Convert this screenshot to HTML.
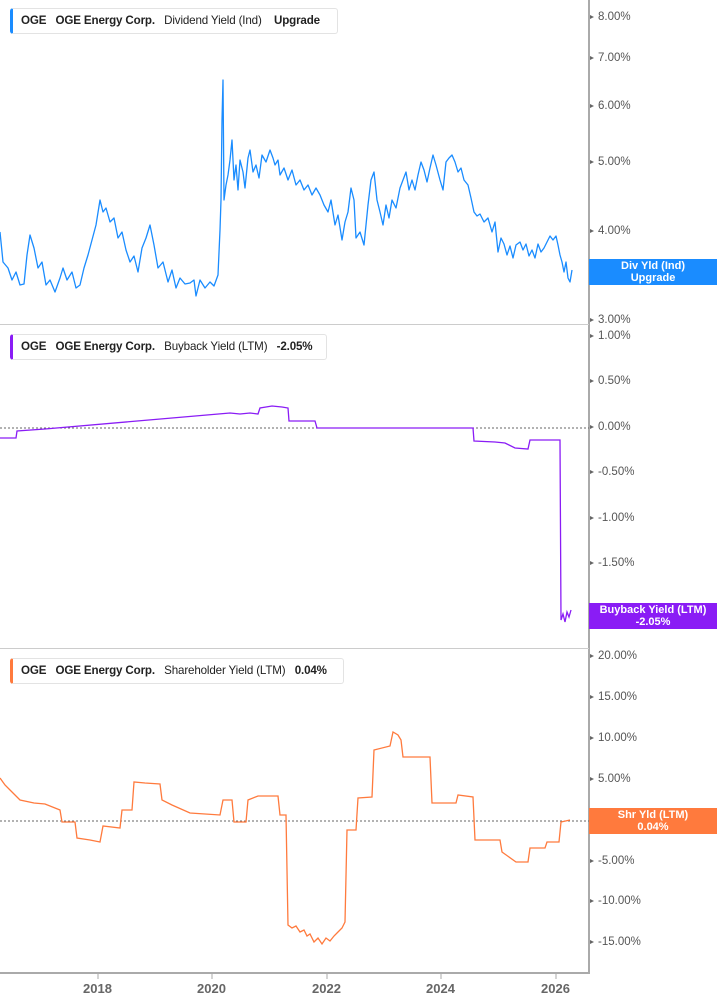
<!DOCTYPE html>
<html><head><meta charset="utf-8"><style>
body{margin:0;width:717px;height:1005px;background:#fff;overflow:hidden;font-family:"Liberation Sans",sans-serif;position:relative}
.hdr{position:absolute;left:10px;height:24px;border:1px solid #e3e3e3;border-left:3px solid;border-radius:3px;background:#fff;font-size:11.6px;letter-spacing:-0.15px;line-height:24px;color:#222;padding-left:8px;white-space:nowrap;box-sizing:content-box}
.b{font-weight:bold}
.lab{position:absolute;left:598px;font-size:11.5px;color:#555}
.tk{position:absolute;left:590px;width:0;height:0;border-left:4px solid #666;border-top:2.5px solid transparent;border-bottom:2.5px solid transparent}
.badge{position:absolute;left:589px;width:128px;height:26px;color:#fff;font-weight:bold;font-size:11px;line-height:12px;text-align:center;padding-top:1px;box-sizing:border-box}
.yr{position:absolute;top:981px;font-size:13px;font-weight:bold;color:#666}
</style></head><body>
<svg width="717" height="1005" style="position:absolute;left:0;top:0">
<line x1="589" y1="0" x2="589" y2="974" stroke="#aaa" stroke-width="2"/>
<line x1="0" y1="324.5" x2="589" y2="324.5" stroke="#ccc"/>
<line x1="0" y1="648.5" x2="589" y2="648.5" stroke="#ccc"/>
<line x1="0" y1="973" x2="590" y2="973" stroke="#aaa" stroke-width="2"/>
<g stroke="#aaa"><line x1="98" y1="973" x2="98" y2="979"/><line x1="212" y1="973" x2="212" y2="979"/><line x1="327" y1="973" x2="327" y2="979"/><line x1="441" y1="973" x2="441" y2="979"/><line x1="556" y1="973" x2="556" y2="979"/></g>
<line x1="0" y1="428" x2="589" y2="428" stroke="#666" stroke-dasharray="2,2"/>
<line x1="0" y1="821" x2="589" y2="821" stroke="#666" stroke-dasharray="2,2"/>
<polyline fill="none" stroke="#1a8cff" stroke-width="1.3" stroke-linejoin="round" points="0,232 3,262 8,268 12,280 16,272 20,285 24,284 27,255 30,235 34,248 38,268 42,262 46,285 50,280 55,292 60,278 63,268 67,280 72,272 76,288 80,285 84,268 88,255 92,240 96,225 100,200 103,212 106,208 110,222 114,218 118,238 122,232 126,250 130,262 134,256 138,272 142,248 146,238 150,225 154,245 158,268 163,262 168,282 172,270 176,288 180,278 185,284 190,283 194,280 196,296 200,280 205,288 210,282 214,286 218,275 220,230 221,200 222,120 223,80 224,200 226,185 228,175 230,160 232,140 234,180 236,165 238,190 240,160 243,172 245,188 248,158 250,150 253,172 256,165 259,178 262,155 266,162 270,150 273,158 275,165 278,160 280,175 284,168 288,180 292,170 296,185 300,180 304,190 308,185 312,195 316,188 320,195 324,205 328,212 331,200 335,225 338,215 342,240 345,222 348,212 351,188 354,200 356,238 360,232 364,245 368,205 371,180 374,172 377,200 380,212 383,225 386,205 389,218 392,200 396,208 400,188 403,180 406,172 409,190 412,180 415,190 418,175 421,162 424,170 427,182 430,168 433,155 436,165 440,180 443,190 446,162 449,158 452,155 455,162 458,172 461,168 464,180 468,185 471,198 474,212 477,216 480,214 484,222 488,218 492,232 495,222 498,252 501,238 504,244 507,255 510,246 513,258 516,245 520,242 523,250 526,244 529,256 532,250 535,258 538,244 541,252 544,248 547,242 550,236 553,240 556,236 558,245 560,255 562,262 564,272 566,262 568,278 570,282 572,270"/>
<polyline fill="none" stroke="#8a1cf5" stroke-width="1.3" points="0,438 16,438 17,431 45,429 230,413 240,414 250,413 258,414 260,408 266,407 272,406 282,407 288,408 289,421 315,421 317,428 473,428 474,441 495,442 505,443 515,448 528,449 530,440 560,440 561,620 563,614 565,622 567,612 569,617 571,610"/>
<polyline fill="none" stroke="#ff7a3d" stroke-width="1.3" points="0,778 5,785 10,790 20,800 34,803 45,804 60,810 62,822 75,822 77,838 90,840 100,842 103,826 120,828 122,810 132,810 134,782 145,783 160,784 162,800 172,805 190,813 220,815 223,800 232,800 234,822 246,822 248,800 258,796 278,796 280,815 286,815 288,925 292,928 296,926 300,932 304,930 307,936 310,934 314,942 318,938 322,944 326,938 330,941 334,936 338,932 342,928 345,922 347,830 356,830 358,798 372,797 374,750 390,746 393,732 398,735 401,740 403,757 430,757 432,803 456,803 458,795 473,797 475,840 500,840 502,852 516,862 528,862 530,848 545,848 547,842 559,842 561,822 570,820"/>
</svg>

<div class="hdr" style="top:8px;width:316px;border-left-color:#1a8cff"><span class="b">OGE</span>&nbsp;&nbsp; <span class="b">OGE Energy Corp.</span>&nbsp;&nbsp; Dividend Yield (Ind)&nbsp;&nbsp;&nbsp; <span class="b">Upgrade</span></div>
<div class="hdr" style="top:334px;width:305px;border-left-color:#8a1cf5"><span class="b">OGE</span>&nbsp;&nbsp; <span class="b">OGE Energy Corp.</span>&nbsp;&nbsp; Buyback Yield (LTM)&nbsp;&nbsp; <span class="b">-2.05%</span></div>
<div class="hdr" style="top:658px;width:322px;border-left-color:#ff7a3d"><span class="b">OGE</span>&nbsp;&nbsp; <span class="b">OGE Energy Corp.</span>&nbsp;&nbsp; Shareholder Yield (LTM)&nbsp;&nbsp; <span class="b">0.04%</span></div>

<div class="tk" style="top:15px"></div><div class="lab" style="top:11px">8.00%</div>
<div class="tk" style="top:56px"></div><div class="lab" style="top:52px">7.00%</div>
<div class="tk" style="top:104px"></div><div class="lab" style="top:100px">6.00%</div>
<div class="tk" style="top:160px"></div><div class="lab" style="top:156px">5.00%</div>
<div class="tk" style="top:229px"></div><div class="lab" style="top:225px">4.00%</div>
<div class="tk" style="top:318px"></div><div class="lab" style="top:314px">3.00%</div>
<div class="badge" style="top:259px;background:#1a8cff">Div Yld (Ind)<br>Upgrade</div>

<div class="tk" style="top:334px"></div><div class="lab" style="top:330px">1.00%</div>
<div class="tk" style="top:379px"></div><div class="lab" style="top:375px">0.50%</div>
<div class="tk" style="top:425px"></div><div class="lab" style="top:421px">0.00%</div>
<div class="tk" style="top:470px"></div><div class="lab" style="top:466px">-0.50%</div>
<div class="tk" style="top:516px"></div><div class="lab" style="top:512px">-1.00%</div>
<div class="tk" style="top:561px"></div><div class="lab" style="top:557px">-1.50%</div>
<div class="badge" style="top:603px;background:#8a1cf5">Buyback Yield (LTM)<br>-2.05%</div>

<div class="tk" style="top:654px"></div><div class="lab" style="top:650px">20.00%</div>
<div class="tk" style="top:695px"></div><div class="lab" style="top:691px">15.00%</div>
<div class="tk" style="top:736px"></div><div class="lab" style="top:732px">10.00%</div>
<div class="tk" style="top:777px"></div><div class="lab" style="top:773px">5.00%</div>
<div class="tk" style="top:818px"></div><div class="lab" style="top:814px">0.00%</div>
<div class="tk" style="top:859px"></div><div class="lab" style="top:855px">-5.00%</div>
<div class="tk" style="top:899px"></div><div class="lab" style="top:895px">-10.00%</div>
<div class="tk" style="top:940px"></div><div class="lab" style="top:936px">-15.00%</div>
<div class="badge" style="top:808px;background:#ff7a3d">Shr Yld (LTM)<br>0.04%</div>

<div class="yr" style="left:83px">2018</div>
<div class="yr" style="left:197px">2020</div>
<div class="yr" style="left:312px">2022</div>
<div class="yr" style="left:426px">2024</div>
<div class="yr" style="left:541px">2026</div>
</body></html>
